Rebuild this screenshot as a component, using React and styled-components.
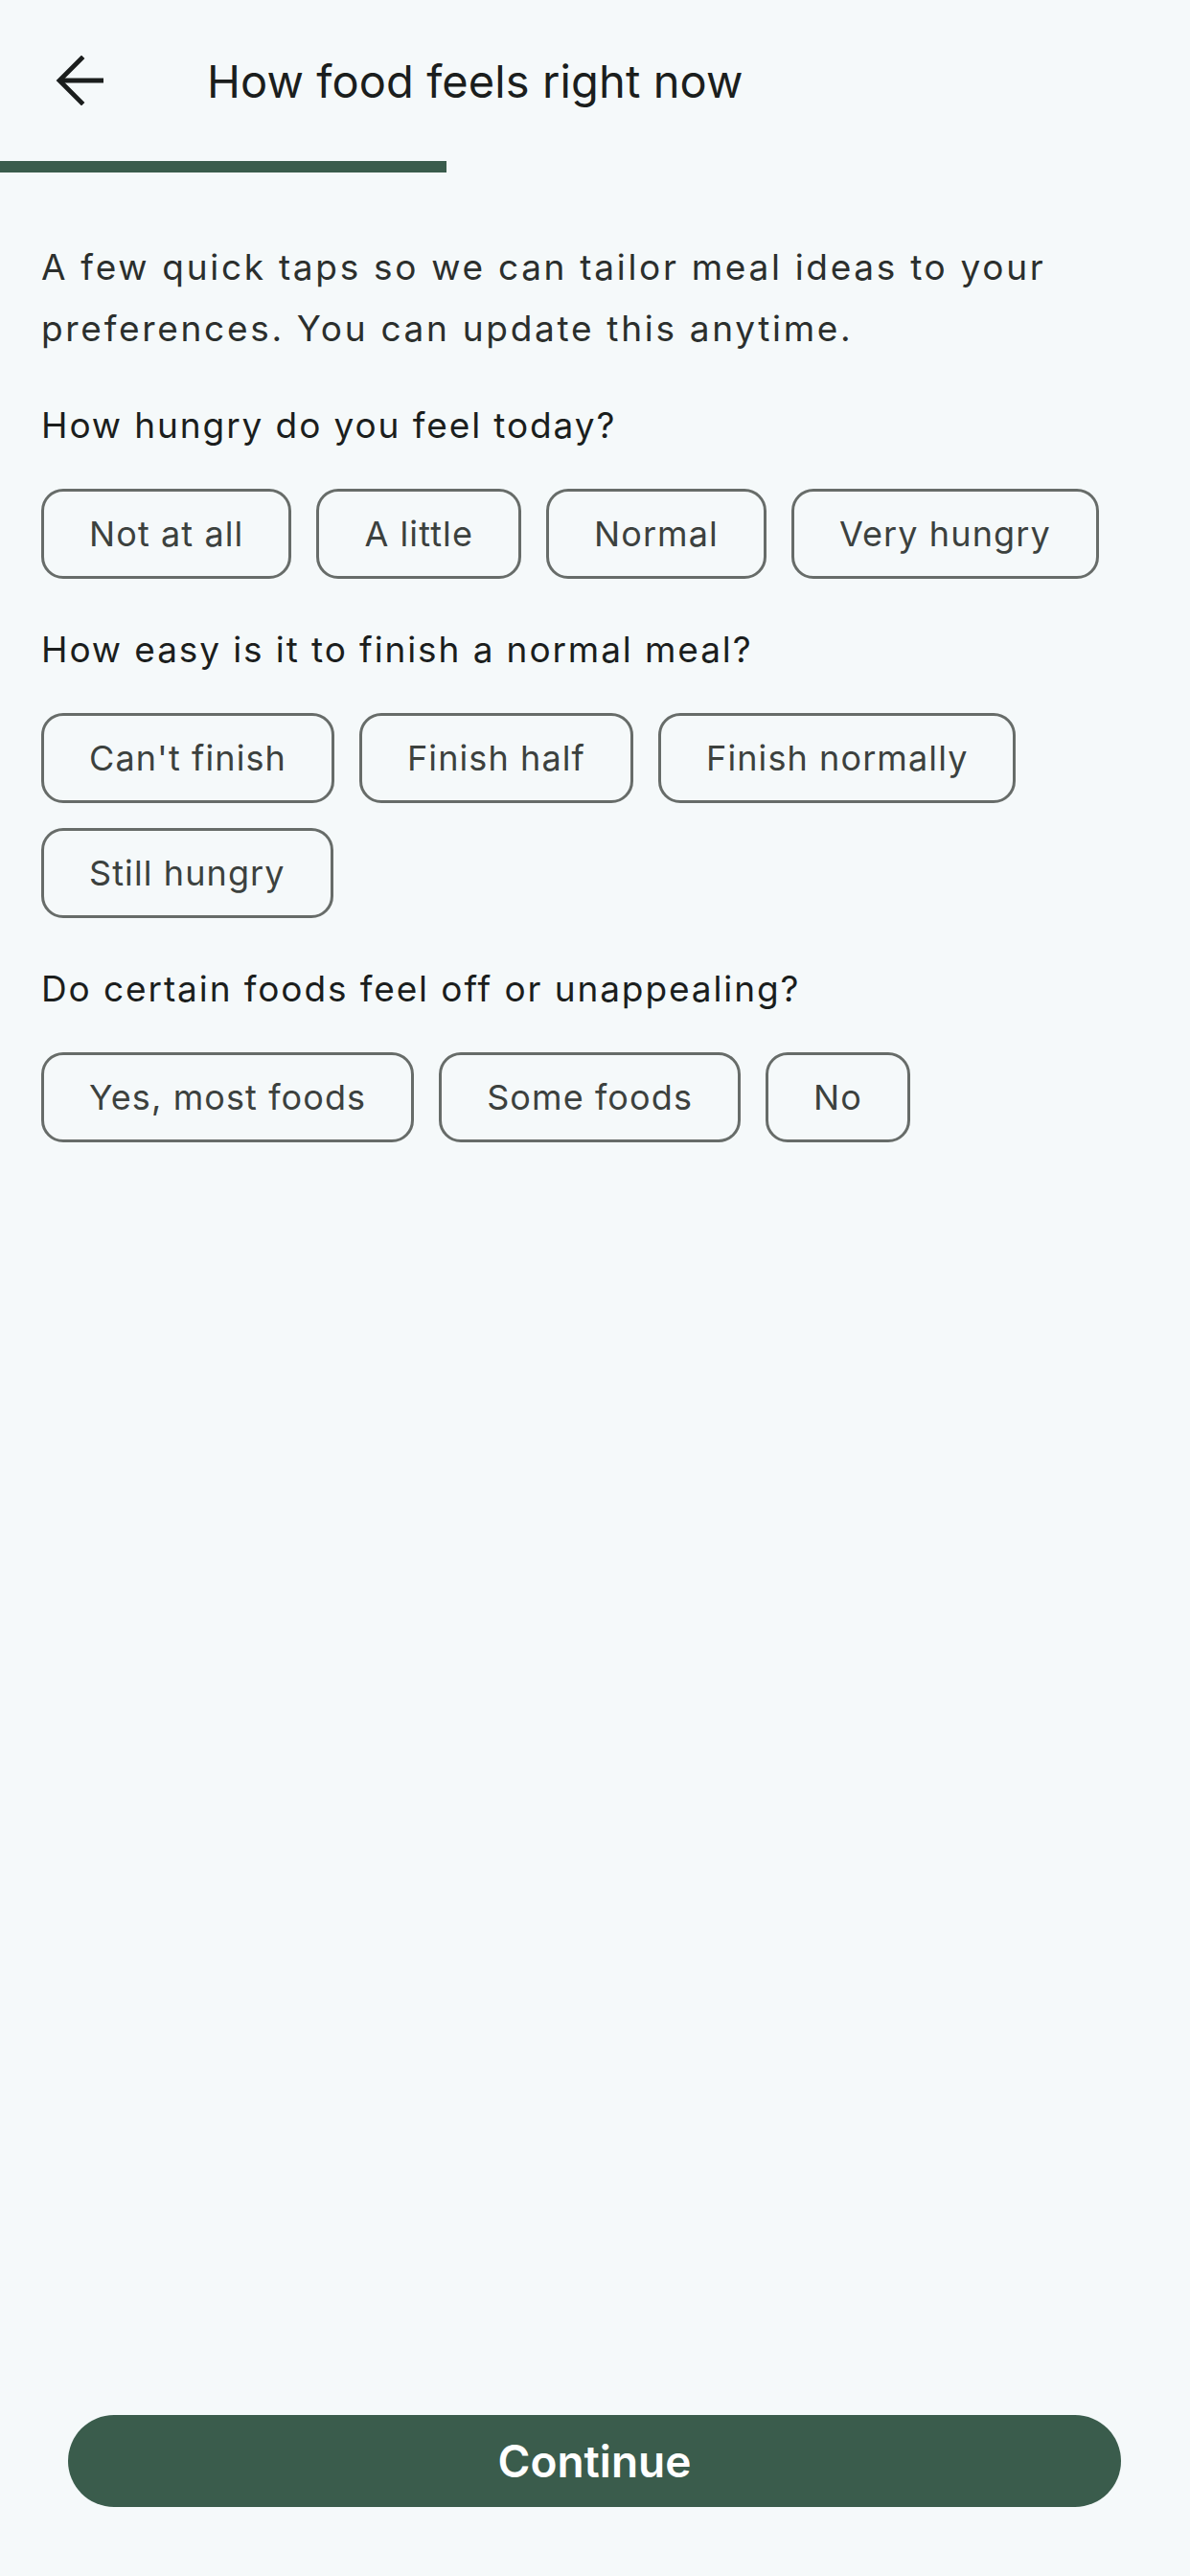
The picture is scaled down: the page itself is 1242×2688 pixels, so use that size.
import React, { useState } from 'react';
import styled, { createGlobalStyle } from 'styled-components';

const COLORS = {
    bg: '#f5f9fa',
    primary: '#3a5c4c',
    ink: '#1b1e1d',
    text: '#2b2f2d',
    chipText: '#3c413e',
    chipBorder: '#676c69',
};

const GlobalStyle = createGlobalStyle`
    html, body {
        margin: 0;
        padding: 0;
        background: ${COLORS.bg};
    }
    body {
        font-family: Inter, "Noto Sans", "Liberation Sans", sans-serif;
        -webkit-font-smoothing: antialiased;
    }
    * { box-sizing: border-box; }
`;

const Page = styled.div`
    min-height: 100vh;
    display: flex;
    flex-direction: column;
`;

const Header = styled.header`
    height: 168px;
    display: flex;
    align-items: center;
    padding-left: 58px;
`;

const BackButton = styled.button`
    width: 52px;
    height: 52px;
    padding: 0;
    border: 0;
    background: none;
    display: flex;
    align-items: center;
    justify-content: center;
    color: ${COLORS.ink};
    cursor: pointer;
`;

const Title = styled.h1`
    margin: 0 0 0 106px;
    font-size: 47px;
    font-weight: 400;
    color: ${COLORS.ink};
    letter-spacing: 0.1px;
`;

const Progress = styled.div`
    height: 12px;
    width: 100%;

    &::before {
        content: '';
        display: block;
        height: 100%;
        width: ${(p) => p.value * 100}%;
        background: ${COLORS.primary};
    }
`;

const Content = styled.main`
    flex: 1;
    padding: 67px 43px 0;
`;

const Intro = styled.p`
    margin: 0 0 45px;
    font-size: 37px;
    line-height: 64px;
    color: ${COLORS.text};
    letter-spacing: 2.7px;
`;

const Section = styled.section`
    & + & {
        margin-top: 50px;
    }
`;

const Question = styled.h2`
    margin: 0 0 42px;
    font-size: 37px;
    line-height: 48px;
    font-weight: 400;
    color: ${COLORS.ink};
    letter-spacing: 1.9px;
`;

const Chips = styled.div`
    display: flex;
    flex-wrap: wrap;
    gap: 26px 26px;
`;

const Chip = styled.button`
    height: 94px;
    padding: 0 47px;
    border: 3px solid ${COLORS.chipBorder};
    border-radius: 23px;
    background: ${(p) => (p.selected ? COLORS.primary : 'transparent')};
    color: ${(p) => (p.selected ? '#fff' : COLORS.chipText)};
    font-family: inherit;
    font-size: 36px;
    letter-spacing: 1.1px;
    display: flex;
    align-items: center;
    cursor: pointer;
`;

const Footer = styled.footer`
    padding: 0 72px 72px 71px;
`;

const ContinueButton = styled.button`
    width: 100%;
    height: 96px;
    border: 0;
    border-radius: 48px;
    background: ${COLORS.primary};
    color: #fff;
    font-family: inherit;
    font-size: 46px;
    font-weight: 600;
    cursor: pointer;
`;

const QUESTIONS = [
    {
        id: 'hunger',
        label: 'How hungry do you feel today?',
        options: ['Not at all', 'A little', 'Normal', 'Very hungry'],
    },
    {
        id: 'finish',
        label: 'How easy is it to finish a normal meal?',
        options: ["Can't finish", 'Finish half', 'Finish normally', 'Still hungry'],
    },
    {
        id: 'aversion',
        label: 'Do certain foods feel off or unappealing?',
        options: ['Yes, most foods', 'Some foods', 'No'],
    },
];

const ArrowBack = () => (
    <svg width="52" height="52" viewBox="0 0 52 52" fill="none">
        <path d="M50 26H5" stroke="currentColor" strokeWidth="4.8" />
        <path d="M27 3L4 26l23 23" stroke="currentColor" strokeWidth="4.8" strokeLinecap="square" />
    </svg>
);

const App = () => {
    const [answers, setAnswers] = useState({});

    return (
        <Page>
            <GlobalStyle />
            <Header>
                <BackButton aria-label="Back">
                    <ArrowBack />
                </BackButton>
                <Title>How food feels right now</Title>
            </Header>
            <Progress value={0.375} />

            <Content>
                <Intro>
                    A few quick taps so we can tailor meal ideas to your preferences. You can update
                    this anytime.
                </Intro>

                {QUESTIONS.map((q) => (
                    <Section key={q.id}>
                        <Question>{q.label}</Question>
                        <Chips>
                            {q.options.map((opt) => (
                                <Chip
                                    key={opt}
                                    selected={answers[q.id] === opt}
                                    onClick={() => setAnswers({ ...answers, [q.id]: opt })}
                                >
                                    {opt}
                                </Chip>
                            ))}
                        </Chips>
                    </Section>
                ))}
            </Content>

            <Footer>
                <ContinueButton>Continue</ContinueButton>
            </Footer>
        </Page>
    );
};

export default App;
